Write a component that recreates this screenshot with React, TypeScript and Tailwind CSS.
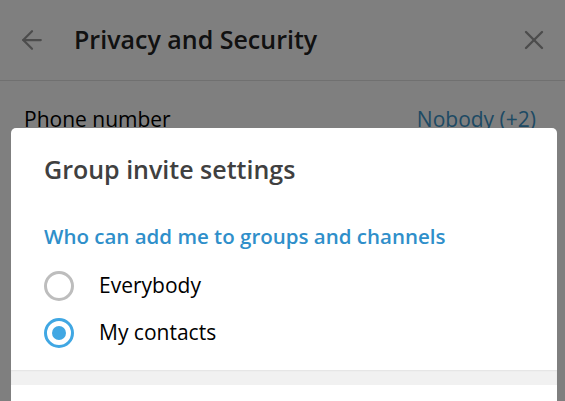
import { ArrowLeft, X } from 'lucide-react';

const font = { fontFamily: '"Open Sans", "Noto Sans", sans-serif' };

function Radio({ checked }: { checked: boolean }) {
  if (checked) {
    return (
      <span className="flex h-[30px] w-[30px] items-center justify-center rounded-full border-[3px] border-[#40a7e3]">
        <span className="h-[14px] w-[14px] rounded-full bg-[#40a7e3]" />
      </span>
    );
  }
  return <span className="block h-[30px] w-[30px] rounded-full border-[3px] border-[#bdbdbd]" />;
}

export default function App() {
  const options = [
    { label: 'Everybody', checked: false },
    { label: 'My contacts', checked: true },
  ];

  return (
    <div className="relative h-[401px] w-[565px] overflow-hidden bg-white" style={font}>
      <div className="flex h-[81px] items-center border-b border-[#e1e1e1] pl-[17px] pr-[15px]">
        <ArrowLeft className="h-[30px] w-[30px] text-[#999]" strokeWidth={1.8} />
        <span className="ml-[27px] text-[25px] font-semibold text-[#222]">Privacy and Security</span>
        <X className="ml-auto h-[32px] w-[32px] text-[#999]" strokeWidth={1.8} />
      </div>
      <div className="flex items-center justify-between pl-[24px] pr-[29px] pt-[23px] text-[21px]">
        <span className="text-black">Phone number</span>
        <span className="text-[#3d94c8]">Nobody (+2)</span>
      </div>

      <div className="absolute inset-0 bg-black/50" />

      <div className="absolute bottom-0 left-[11px] top-[128px] flex w-[546px] flex-col overflow-hidden rounded-t-[5px] bg-white">
        <div className="px-[33px] pt-[25px] pb-[14px]">
          <h2 className="text-[25px] leading-[32px] font-semibold text-[#404040]">Group invite settings</h2>
          <p className="mt-[37px] text-[20.5px] leading-[28px] font-semibold text-[#2f8fca]">
            Who can add me to groups and channels
          </p>
          <div className="mt-[12px] flex flex-col">
            {options.map((option) => (
              <div key={option.label} className="flex h-[47px] items-center">
                <Radio checked={option.checked} />
                <span className="ml-[25px] text-[21px] text-black">{option.label}</span>
              </div>
            ))}
          </div>
        </div>
        <div className="h-[15px] bg-[#f1f1f1] shadow-[inset_0_1px_2px_rgba(0,0,0,0.06)]" />
        <div className="flex-1 bg-white" />
      </div>
    </div>
  );
}
